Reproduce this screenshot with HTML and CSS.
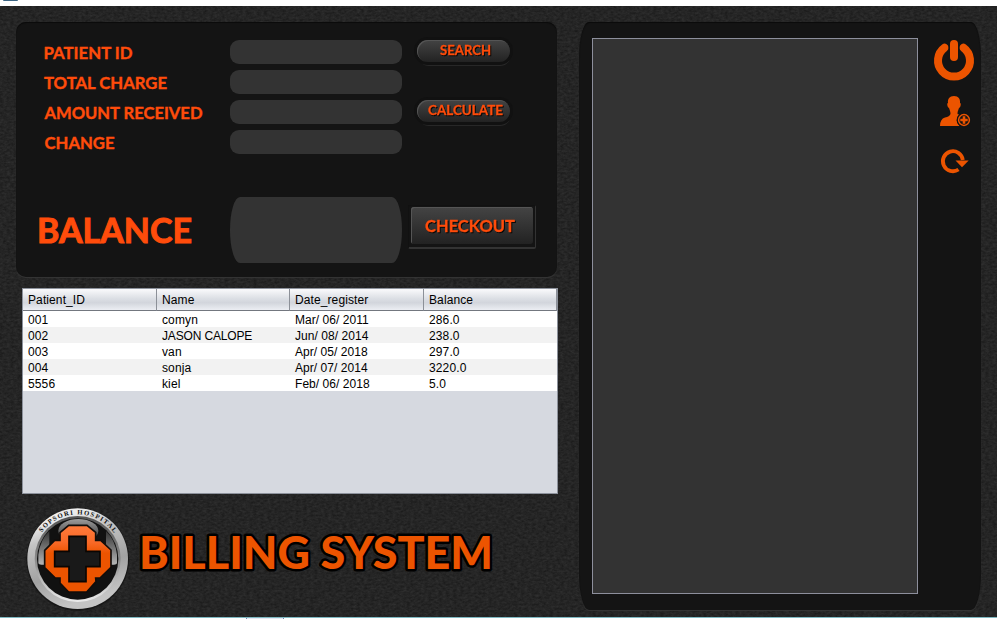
FILE: index.html
```html
<!DOCTYPE html>
<html lang="en">
<head>
<meta charset="utf-8">
<title>Billing System</title>
<link rel="stylesheet" href="styles.css">
</head>
<body>
<div class="titlebar"><span class="app-icon"></span></div>
<main class="window">
  <svg class="texture" width="997" height="611" aria-hidden="true">
    <filter id="grain" x="0" y="0" width="100%" height="100%" color-interpolation-filters="sRGB">
      <feTurbulence type="fractalNoise" baseFrequency="0.28 0.45" numOctaves="3" seed="4"/>
      <feColorMatrix values="0.11 0 0 0 0.09  0.11 0 0 0 0.09  0.11 0 0 0 0.09  0 0 0 0 1"/>
    </filter>
    <rect width="997" height="611" filter="url(#grain)"/>
  </svg>
  <div class="left">
    <section class="panel billing">
      <div class="form">
        <svg class="label" width="180" height="24"><text x="27.5" y="19" textLength="89" lengthAdjust="spacingAndGlyphs">PATIENT ID</text></svg>
        <span class="field"></span>
        <button class="pill"><svg width="93" height="22"><text x="23" y="15" textLength="51" lengthAdjust="spacingAndGlyphs">SEARCH</text></svg></button>
        <svg class="label" width="180" height="24"><text x="28" y="19" textLength="123" lengthAdjust="spacingAndGlyphs">TOTAL CHARGE</text></svg>
        <span class="field"></span>
        <span></span>
        <svg class="label" width="190" height="24"><text x="28.5" y="19" textLength="158" lengthAdjust="spacingAndGlyphs">AMOUNT RECEIVED</text></svg>
        <span class="field"></span>
        <button class="pill"><svg width="93" height="22"><text x="11" y="15" textLength="75" lengthAdjust="spacingAndGlyphs">CALCULATE</text></svg></button>
        <svg class="label" width="180" height="24"><text x="28.500" y="19" textLength="70" lengthAdjust="spacingAndGlyphs">CHANGE</text></svg>
        <span class="field"></span>
        <span></span>
      </div>
      <div class="balance-row">
        <svg class="label big" width="214" height="66"><text x="21" y="46" textLength="155" lengthAdjust="spacingAndGlyphs">BALANCE</text></svg>
        <span class="field tall"></span>
        <div class="checkout-frame"><button class="checkout"><svg width="122" height="37"><text x="14" y="25" textLength="90" lengthAdjust="spacingAndGlyphs">CHECKOUT</text></svg></button></div>
      </div>
    </section>
    <div class="table-box">
      <table>
        <colgroup><col class="c1"><col class="c2"><col class="c3"><col class="c4"></colgroup>
        <thead><tr><th>Patient_ID</th><th>Name</th><th>Date_register</th><th>Balance</th></tr></thead>
        <tbody>
          <tr><td>001</td><td>comyn</td><td>Mar/ 06/ 2011</td><td>286.0</td></tr>
          <tr><td>002</td><td class="caps">JASON CALOPE</td><td>Jun/ 08/ 2014</td><td>238.0</td></tr>
          <tr><td>003</td><td>van</td><td>Apr/ 05/ 2018</td><td>297.0</td></tr>
          <tr><td>004</td><td>sonja</td><td>Apr/ 07/ 2014</td><td>3220.0</td></tr>
          <tr><td>5556</td><td>kiel</td><td>Feb/ 06/ 2018</td><td>5.0</td></tr>
        </tbody>
      </table>
    </div>
    <div class="brand">
      <svg class="logo" width="106" height="106" viewBox="45 78 318 318">
        <defs>
          <linearGradient id="ring" x1="0" y1="0" x2="0.3" y2="1"><stop offset="0" stop-color="#fff"/><stop offset=".2" stop-color="#e6e6e6"/><stop offset=".35" stop-color="#c4c4c4"/><stop offset=".7" stop-color="#a2a2a2"/><stop offset="1" stop-color="#c4c4c4"/></linearGradient>
          <linearGradient id="bevel" x1="0" y1="0" x2="0" y2="1"><stop offset="0" stop-color="#555"/><stop offset=".5" stop-color="#888"/><stop offset="1" stop-color="#ececec"/></linearGradient>
          <linearGradient id="shine" x1="0" y1="0" x2="0" y2="1"><stop offset="0" stop-color="#ccc" stop-opacity=".75"/><stop offset="1" stop-color="#888" stop-opacity=".35"/></linearGradient>
          <linearGradient id="side" x1="0" y1="0" x2="0" y2="1"><stop offset="0" stop-color="#333"/><stop offset="1" stop-color="#b5b5b5"/></linearGradient>
          <linearGradient id="gloss" x1="0" y1="0" x2="0" y2="1"><stop offset="0" stop-color="#ff7b3c"/><stop offset=".25" stop-color="#f96a28"/><stop offset=".42" stop-color="#ec5400"/></linearGradient>
          <path id="arc" d="M70 236A133 133 0 0 1 336 236"/>
        </defs>
        <circle cx="203" cy="238" r="154" fill="#0c0c0c" opacity=".55"/>
        <circle cx="203" cy="236" r="151" fill="url(#ring)"/>
        <circle cx="203" cy="237" r="129" fill="url(#bevel)"/>
        <circle cx="203" cy="237" r="122" fill="#111"/>
        <path d="M85 250V224Q90 180 118 153V254H94Q86 254 85 250ZM321 250V224Q316 180 288 153V254H312Q320 254 321 250Z" fill="url(#side)"/>
        <ellipse cx="205" cy="152" rx="60" ry="35" fill="url(#shine)"/>
        <path d="M176 136H231L257 157V181H272L303 210V262L270 294H257L258 305L230 336H176L150 309V294H136L104 263V211L134 181H150V158Z" fill="url(#gloss)" stroke="#120d0a" stroke-width="5"/>
        <path d="M177 169H228V214H270V260H228V305H177V260H134V214H177Z" fill="#191919" stroke="#0a0502" stroke-width="5"/>
        <text class="ring-text"><textPath href="#arc" startOffset="84" textLength="252">SOPSORI HOSPITAL</textPath></text>
      </svg>
      <svg class="title" width="375" height="70"><text x="7" y="44" textLength="354" lengthAdjust="spacingAndGlyphs">BILLING SYSTEM</text></svg>
    </div>
  </div>
  <section class="panel side">
    <div class="receipt"></div>
    <nav class="tools">
      <svg width="42" height="42" viewBox="0 0 42 42"><path d="M11.5 9.500A16 16 0 1 0 30.500 9.500" fill="none" stroke="#ec5400" stroke-width="8" stroke-linecap="round" transform="translate(0 -.8)"/><path d="M21 5V18" stroke="#141414" stroke-width="11" stroke-linecap="round"/><path d="M21 5V18" stroke="#ec5400" stroke-width="8" stroke-linecap="round"/></svg>
      <svg class="user" width="32" height="32" viewBox="0 0 32 32"><path d="M15 1C10.500 1 8.500 4 9 8Q7.800 8 8.500 11Q8.800 12.500 10 13C10.500 15 11.500 16 11.500 19Q10.500 21.500 6 22.500Q1 24 1 31H20.500A7.500 7.500 0 0 1 20 19.500L18.500 19C18.500 16 19.500 15 20 13Q21.200 12.500 21.500 11Q22.200 8 21 8C21.500 4 19.500 1 15 1Z" fill="#ec5400"/><circle cx="25" cy="25" r="7.200" fill="#141414"/><circle cx="25" cy="25" r="5.400" fill="#141414" stroke="#ec5400" stroke-width="1.500"/><path d="M25 21.300V28.700M21.300 25H28.700" stroke="#ec5400" stroke-width="2.600"/></svg>
      <svg class="refresh" width="30" height="26" viewBox="0 0 30 26"><path d="M18.500 21.500A10 10 0 1 1 22.800 12" fill="none" stroke="#ec5400" stroke-width="3.800"/><path d="M15.500 12.500H28.700L22 19.200Z" fill="#ec5400"/></svg>
    </nav>
  </section>
</main>
<footer class="taskbar"><span class="tab"></span></footer>
</body>
</html>
```
FILE: styles.css
```css
* { box-sizing: border-box; }
body { margin: 0; width: 997px; height: 619px; overflow: hidden; background: #fff; font-family: "Liberation Sans", Arial, sans-serif; }
svg { display: block; overflow: visible; }
button { display: block; padding: 0; border: 0; font: inherit; }

.titlebar { height: 6px; }
.app-icon { display: block; width: 15px; height: 1px; margin-left: 3px; background: #3b6482; border-radius: 0 0 2px 2px; }
.window { position: relative; isolation: isolate; display: flex; height: 611px; padding: 16px 16px 7px; gap: 22px; background: #242424; overflow: hidden; }
.texture { position: absolute; inset: 0; z-index: -1; }

.panel { background: #141414; box-shadow: inset 0 1px 1px #0a0a0a, 0 1px 1px #363636; }
.left { width: 541px; }
.billing { height: 255px; border-radius: 10px; padding-top: 18px; }
.form { display: grid; grid-template-columns: 214px 172px 93px; column-gap: 0; row-gap: 6px; grid-auto-rows: 24px; }
.form .pill { margin-left: 15px; }
.label text { font: bold 17px Lato, "Open Sans", sans-serif; fill: #ff4c0b; stroke: #ff4c0b; stroke-width: 0.4px; }
.label.big text { font-size: 34.5px; stroke-width: 1px; }
.field { display: block; height: 24px; background: #333; border-radius: 9px; }
.pill { width: 93px; height: 22px; border-radius: 11px; background: linear-gradient(#434343, #222); box-shadow: inset 1px 1px 0 #555, 0 0 0 3px #111, 1px 4px 0 #272727; }
.pill text, .checkout text { font: bold 13px Lato, "Open Sans", sans-serif; fill: #ff4c0b; stroke: #ff4c0b; stroke-width: 0.3px; filter: drop-shadow(1px 1px 0 #090909); }
.balance-row { display: flex; margin-top: 43px; }
.tall { width: 172px; height: 66px; border-radius: 10px / 33px; }
.checkout-frame { width: 128px; height: 44px; margin: 8px 0 0 6px; padding: 1px 0 0 2px; border: 1px solid #111; border-right-color: #333; border-bottom: 2px solid #333; border-radius: 2px; }
.checkout { width: 122px; height: 37px; border-radius: 3px; background: linear-gradient(#444, #222); box-shadow: inset 1px 1px 0 #555; }
.checkout text { font-size: 17.5px; }

.table-box { width: 536px; height: 206px; margin: 11px 0 0 6px; border: 1px solid #8d929c; background: #d6d9e0; }
table { width: 534px; table-layout: fixed; border-collapse: separate; border-spacing: 0; font-size: 12px; color: #000; }
.c1, .c3 { width: 134px; }
.c2 { width: 133px; }
.c4 { width: 133px; }
th { height: 22px; padding: 0 0 0 5px; font-weight: normal; text-align: left; line-height: 20px; background: linear-gradient(#fafafc, #dcdfe5 45%, #d2d5dc 65%, #eceef3); border-right: 1px solid #8c9098; border-bottom: 1px solid #73777f; letter-spacing: 0.1px; }
td { height: 16px; padding: 2px 0 0 5px; line-height: 14px; background: #fff; white-space: nowrap; letter-spacing: 0.12px; }
td:nth-child(3) { letter-spacing: 0.05px; }
td.caps { letter-spacing: -0.15px; }
tr:nth-child(even) td { background: #f2f2f2; }

.brand { display: flex; margin: 12px 0 0 9px; }
.title { margin-left: 1px; margin-top: 19px; }
.title text { font: 900 45px Lato, "Open Sans", sans-serif; fill: #ec5400; stroke: #000; stroke-width: 5px; stroke-linejoin: round; paint-order: stroke; }
.ring-text { font: bold 20px "Liberation Serif", serif; fill: #111; }

.side { display: flex; width: 402px; height: 588px; border-radius: 10px / 36px; padding: 16px 0 0 13px; }
.receipt { width: 326px; height: 556px; background: #333; border: 1px solid #8d8f9c; }
.tools { display: flex; flex-direction: column; margin: 1px 0 0 15px; }
.user { margin: 14px 0 0 6px; }
.refresh { margin: 21px 0 0 7px; }
.taskbar { height: 2px; border-top: 1px solid #7fb9c2; }
.tab { display: block; width: 38px; height: 1px; margin-left: 246px; background: #e6e9f5; border-left: 1px solid #7383b0; border-right: 1px solid #7383b0; }
```
